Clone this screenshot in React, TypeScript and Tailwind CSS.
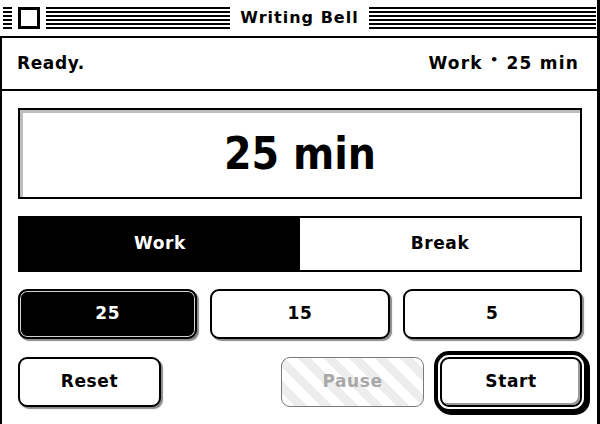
import React, { useState } from 'react';

const font = { fontFamily: '"DejaVu Sans", "Liberation Sans", sans-serif' };

// horizontal pinstripes used across the title bar
const stripes = 'h-[22px] bg-[repeating-linear-gradient(to_bottom,#000_0px,#000_2px,transparent_2px,transparent_4px)]';

export default function App() {
  const [mode, setMode] = useState<'work' | 'break'>('work');
  const [minutes, setMinutes] = useState(25);

  const presets = [25, 15, 5];

  return (
    <div className="w-[600px] h-[424px] bg-white text-black flex flex-col border-r-[3px] border-black overflow-hidden" style={font}>
      {/* Title bar */}
      <div className="h-[36px] shrink-0 grid grid-cols-[1fr_auto_1fr] items-center pl-[3px] pr-[1px]">
        <div className="flex items-center">
          <div className={`w-[9px] ${stripes}`} />
          <div className="ml-[6px] w-[22px] h-[22px] border-[3px] border-black bg-white" />
          <div className={`ml-[6px] flex-1 ${stripes}`} />
        </div>
        <div className="px-[10px] text-[16px] font-bold tracking-[1px] leading-none">Writing Bell</div>
        <div className={stripes} />
      </div>

      <div className="flex-1 flex flex-col border-t-2 border-l-2 border-black">
        {/* Status row */}
        <div className="h-[53px] shrink-0 flex items-center justify-between pl-[15px] pr-[18px] border-b-2 border-black text-[17px] font-bold tracking-[0.6px]">
          <span>Ready.</span>
          <span className="tracking-[1.2px]">
            {mode === 'work' ? 'Work' : 'Break'} <span className="relative -top-[5px] text-[13px]">•</span> {minutes} min
          </span>
        </div>

        <div className="flex-1 flex flex-col gap-[17px] pt-[17px] pl-[16px] pr-[15px]">
          {/* Time display */}
          <div className="h-[91px] border-2 border-black shadow-[inset_3px_3px_0_#bdbdbd] flex items-center justify-center">
            <span
              className="text-[44px] font-bold leading-none tracking-[0px]"
              style={{ fontFamily: '"DejaVu Sans Condensed", "DejaVu Sans", sans-serif', fontStretch: 'condensed' }}
            >
              {minutes} min
            </span>
          </div>

          {/* Mode switch */}
          <div className="h-[56px] border-2 border-black grid grid-cols-2 text-[17px] font-bold tracking-[0.6px]">
            <button
              onClick={() => setMode('work')}
              className={`flex items-center justify-center ${mode === 'work' ? 'bg-black text-white' : 'bg-white text-black'}`}
            >
              Work
            </button>
            <button
              onClick={() => setMode('break')}
              className={`flex items-center justify-center ${mode === 'break' ? 'bg-black text-white' : 'bg-white text-black'}`}
            >
              Break
            </button>
          </div>

          {/* Duration presets */}
          <div className="grid grid-cols-3 gap-[13px] h-[50px] text-[17px] font-bold tracking-[0.6px]">
            {presets.map(p => (
              <button
                key={p}
                onClick={() => setMinutes(p)}
                className={`rounded-[9px] border-2 border-black shadow-[2px_2px_1px_#8a8a8a] ${
                  minutes === p ? 'bg-black text-white shadow-[inset_0_0_0_1px_#d4d4d4,2px_2px_1px_#8a8a8a]' : 'bg-white text-black'
                }`}
              >
                {p}
              </button>
            ))}
          </div>

          {/* Controls */}
          <div className="flex items-center justify-between h-[50px] mt-[1px] text-[17px] font-bold tracking-[0.6px]">
            <button className="w-[143px] h-[50px] rounded-[9px] border-2 border-black bg-white shadow-[2px_2px_1px_#8a8a8a]">
              Reset
            </button>
            <div className="flex items-center gap-[16px]">
              <button
                disabled
                className="w-[143px] h-[50px] rounded-[9px] border-[1.5px] border-[#7a7a7a] text-[#a8a8a8] bg-[repeating-linear-gradient(45deg,#ffffff_0px,#ffffff_9px,#ededed_9px,#ededed_18px)]"
              >
                Pause
              </button>
              <button className="w-[142px] h-[50px] rounded-[9px] border-2 border-black bg-white shadow-[inset_-2px_-2px_0_#9a9a9a,0_0_0_2px_#fff,0_0_0_6px_#000,2px_2px_0_6px_#000]">
                Start
              </button>
            </div>
          </div>
        </div>
      </div>
    </div>
  );
}
